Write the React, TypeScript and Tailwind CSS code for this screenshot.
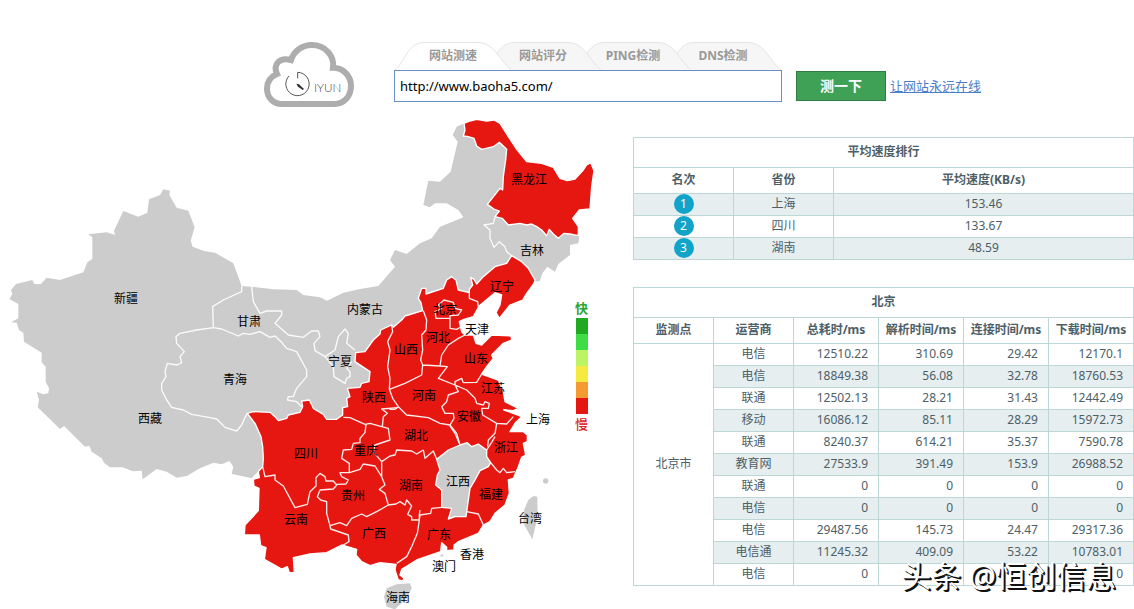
import React, { useState } from "react";

const tabs = [
  { label: "网站测速", layer: "z-40" },
  { label: "网站评分", layer: "z-30" },
  { label: "PING检测", layer: "z-20" },
  { label: "DNS检测", layer: "z-10" },
];

const ranking = [
  { province: "上海", speed: "153.46" },
  { province: "四川", speed: "133.67" },
  { province: "湖南", speed: "48.59" },
];

const results = [
  ["电信", "12510.22", "310.69", "29.42", "12170.1"],
  ["电信", "18849.38", "56.08", "32.78", "18760.53"],
  ["联通", "12502.13", "28.21", "31.43", "12442.49"],
  ["移动", "16086.12", "85.11", "28.29", "15972.73"],
  ["联通", "8240.37", "614.21", "35.37", "7590.78"],
  ["教育网", "27533.9", "391.49", "153.9", "26988.52"],
  ["联通", "0", "0", "0", "0"],
  ["电信", "0", "0", "0", "0"],
  ["电信", "29487.56", "145.73", "24.47", "29317.36"],
  ["电信通", "11245.32", "409.09", "53.22", "10783.01"],
  ["电信", "0", "0", "0", "0"],
];

const resultHeads = ["监测点", "运营商", "总耗时/ms", "解析时间/ms", "连接时间/ms", "下载时间/ms"];

const legendColors = [
  "bg-[#22a922]",
  "bg-[#3fdd45]",
  "bg-[#bdf464]",
  "bg-[#f5ea3d]",
  "bg-[#f59a30]",
  "bg-[#e61610]",
];

// Provinces without a measurement
const greyLand =
  "M510 572 490 568 480 585 447 598 442 638 415 650 370 633 342 692 345 705 320 697 265 703 277 712 277 777 262 787 250 817 180 840 140 833 122 853 103 852 97 840 48 852 33 870 37 883 28 897 55 912 55 955 33 967 50 968 57 990 70 998 72 1025 125 1058 125 1087 137 1100 137 1145 147 1165 145 1180 130 1183 110 1175 117 1200 113 1222 180 1287 192 1278 255 1340 268 1337 275 1355 305 1375 312 1388 330 1402 368 1402 398 1414 425 1412 428 1438 470 1407 500 1415 530 1433 560 1428 600 1405 640 1388 665 1393 688 1383 700 1400 695 1422 725 1428 755 1435 785 1402 1000 1300 1250 1100 1330 900 1500 850 1605 845 1620 843 1627 820 1642 800 1665 815 1675 792 1710 765 1710 735 1735 730 1738 710 1700 600 1560 560 1530 450 1490 400 1410 380 1392 370 1370 380 1358 405 1373 425 1352 515 1320 545 1285 542 1270 615 1290 622 1305 610 1340 610 1375 630 1390 652 1365 662 1320 680 1295 715 1260 730 1220 762 1185 750 1170 780 1185 800 1135 858 1080 867 1030 878 981 902 960 892 910 885 890 870 820 868 755 860 725 858 700 790 645 758 612 753 578 740 572 722 584 682 565 632 530 623 508 585Z";

const heilongjiang =
  "M1392 370 1410 363 1430 358 1460 363 1482 360 1500 370 1525 410 1550 448 1580 485 1625 490 1660 502 1680 535 1702 542 1725 537 1750 510 1760 495 1772 488 1782 512 1775 560 1770 627 1738 630 1718 655 1735 680 1735 707 1710 702 1692 700 1675 715 1660 702 1648 688 1640 707 1625 690 1610 680 1595 672 1580 675 1560 670 1525 675 1507 655 1485 650 1498 633 1482 627 1462 613 1500 565 1508 570 1510 530 1517 480 1520 448 1498 427 1480 440 1445 448 1430 438 1422 415 1405 410 1390 408 1395 390Z";

const redLand =
  "M742 1240 760 1235 810 1237 825 1250 835 1262 860 1255 865 1245 900 1237 908 1220 905 1203 928 1200 940 1225 970 1243 980 1258 1010 1258 1028 1245 1028 1223 1043 1220 1040 1195 1050 1190 1042 1165 1080 1162 1085 1150 1107 1145 1110 1115 1065 1085 1067 1058 1095 1055 1120 1020 1140 1002 1142 990 1175 975 1180 982 1205 960 1215 948 1268 932 1263 908 1255 895 1265 865 1278 865 1278 882 1330 865 1340 840 1355 830 1368 840 1375 870 1408 878 1408 868 1418 855 1412 832 1422 838 1430 852 1450 830 1485 800 1520 790 1535 767 1565 785 1585 805 1605 840 1602 850 1580 880 1568 900 1530 915 1498 955 1488 938 1500 915 1505 885 1485 878 1465 895 1438 917 1420 950 1392 958 1378 965 1385 995 1395 1005 1420 1005 1428 1030 1445 1035 1475 1005 1533 1008 1535 1020 1510 1030 1475 1065 1480 1075 1460 1100 1445 1122 1495 1140 1510 1175 1515 1205 1555 1225 1540 1232 1512 1230 1540 1240 1565 1250 1545 1270 1530 1295 1570 1295 1582 1305 1582 1325 1570 1330 1577 1365 1565 1372 1555 1400 1540 1435 1525 1440 1528 1480 1515 1515 1485 1540 1470 1565 1450 1575 1435 1600 1375 1625 1362 1635 1362 1650 1340 1652 1340 1642 1325 1628 1322 1655 1250 1680 1205 1708 1200 1725 1212 1735 1208 1743 1195 1740 1185 1710 1188 1693 1140 1688 1110 1697 1085 1685 1068 1665 1070 1648 1025 1635 980 1658 930 1662 880 1673 883 1718 868 1718 862 1700 845 1707 793 1678 798 1643 782 1637 778 1605 733 1605 735 1575 775 1532 777 1465 762 1458 760 1438 778 1433 775 1415 788 1400 790 1375 788 1340 783 1310 765 1270Z";

const jiangxi =
  "M1310 1378 1345 1350 1380 1335 1402 1328 1415 1340 1435 1332 1460 1350 1460 1370 1472 1388 1465 1400 1440 1412 1425 1440 1410 1465 1398 1550 1365 1550 1345 1557 1355 1525 1325 1522 1325 1470 1307 1455 1312 1425 1320 1410Z";

const taiwan = "M1600 1488 1612 1490 1613 1550 1597 1618 1570 1570 1572 1530 1585 1500Z";
const hainan = "M1160 1765 1190 1753 1230 1750 1235 1765 1220 1795 1185 1828 1160 1820 1152 1790Z";

// Border lines, grouped by part of the country
const borders = [
  {
    part: "west",
    x: 480,
    y: 540,
    d: "M245 318V335L190 360 158 380 160 443M160 443 110 450 60 460 48 470 50 490 73 515 60 530 65 548 52 555 20 550M-355 7-320 8-290-10-240 10-220 0-190 3-160 18-135 12-115 13-85 0-40-7-5 5 20 10 45 16M22 550 15 575 18 590 5 610 5 630 20 660 35 682 70 690 95 703 150 713 170 717 195 742 230 753 245 735 255 712 262 700M160 443 185 447 235 468 250 460 270 463 300 455 330 472 345 468 365 487 380 505 410 515 440 570 440 590 410 625 400 650 385 650 382 660 410 665 425 680M275 320 280 365 300 400 320 393 365 393 365 405 345 430 385 465 430 472 455 453 475 453 480 470 462 490 465 512 495 530 525 510 535 470 555 447 565 460 560 490 585 510M495 530 520 560 522 590 555 610 560 595 570 590 570 575 560 565 575 545",
  },
  {
    part: "north-east",
    x: 1020,
    y: 330,
    d: "M465 322 460 340 432 345 450 360 450 385 462 412 478 395 495 410 500 425 515 437",
  },
  {
    part: "centre",
    x: 1020,
    y: 810,
    d: "M155 165 158 185 143 215 150 240 143 290 150 325 148 358 158 385 175 410M148 358 195 340 245 315 248 285M250 122 260 150 258 180 245 195 248 240 242 270 248 285 300 288 305 255 325 225 355 205 375 195M300 288 322 290 295 325 345 345 345 335 365 325 370 338 410 337 425 312M345 345 380 360 405 385 410 400 430 405 435 395 448 400 445 415 425 415 428 435 470 460 500 462 520 440M345 345 355 365 325 375 320 395 305 410 315 430 340 430 342 445 330 465M175 410 200 435 265 443 300 460 330 465 350 490 360 525M470 460 465 490 445 510 443 530M490 418 525 428M312 90 340 97 345 115 365 120 355 135 330 137 330 145 288 145 285 125 305 115 295 105ZM330 145V175L350 178 360 172M388 68V85L413 95 415 110M175 410 165 418 148 418",
  },
  {
    part: "south-west",
    x: 690,
    y: 1140,
    d: "M340 112 360 113 405 133 420 130 455 140 475 145 480 180 435 195 430 215 455 245M503 83 455 87 472 100 460 110 457 140M408 133 405 158 390 175 390 188 370 190 365 208 340 210 335 235 358 250 358 278 330 278 335 290 355 300 348 312 320 313M358 278 390 268 400 252 435 258 455 290M455 245V290L465 315 448 328 465 340 475 375M455 245 480 228 495 225 500 210 545 213 560 222 580 210M98 260 105 290 135 285 135 300 160 318 195 383 232 373 240 335 258 318 258 293 270 280 285 290 288 303 310 303 320 315 310 327 270 330 262 350 272 360 290 365 290 400 300 437 330 428 350 437 365 415 395 402 410 410 440 395 475 375 498 372 510 365 525 375 530 360 545 378 533 403 545 410 545 420 568 420 562 460 545 500 530 530 500 550M300 437 302 447 355 465 357 485 340 495M568 420 568 405 570 390",
  },
  {
    part: "south-east",
    x: 1140,
    y: 1200,
    d: "M130 150 135 175 160 153 170 178M118 358 120 345 152 340 155 325 185 322M332 188 350 210 360 218 370 205 380 218 405 215M260 335 295 342 310 375M320 150 333 130 345 110M210 78 225 100 240 135",
  },
];

const labels: [string, number, number][] = [
  ["新疆", 126, 298],
  ["西藏", 150, 418],
  ["青海", 235, 379],
  ["甘肃", 249, 321],
  ["宁夏", 340, 361],
  ["内蒙古", 365, 309],
  ["黑龙江", 529, 179],
  ["吉林", 532, 250],
  ["辽宁", 502, 286],
  ["北京", 445, 309],
  ["天津", 477, 329],
  ["河北", 438, 337],
  ["山西", 406, 349],
  ["山东", 476, 358],
  ["陕西", 374, 397],
  ["河南", 424, 395],
  ["江苏", 493, 388],
  ["安徽", 469, 416],
  ["上海", 538, 419],
  ["湖北", 416, 435],
  ["浙江", 506, 447],
  ["四川", 306, 453],
  ["重庆", 366, 450],
  ["湖南", 411, 485],
  ["江西", 458, 481],
  ["贵州", 353, 495],
  ["福建", 491, 494],
  ["云南", 296, 519],
  ["广西", 374, 533],
  ["广东", 439, 534],
  ["台湾", 530, 518],
  ["香港", 472, 554],
  ["澳门", 444, 566],
  ["海南", 398, 597],
];

const Logo: React.FC = () => (
  <svg viewBox="42 36 270 195" className="h-[65px] w-[90px] shrink-0" role="img" aria-label="IYUN">
    <path
      d="M95 222C70 222 51 202 51 176C51 155 62 140 81 132C68 104 88 80 123 90C132 62 158 45 185 45C226 45 254 78 249 113C280 113 303 138 303 168C303 200 281 222 253 222Z"
      fill="none"
      stroke="#adadad"
      strokeWidth="18"
    />
    <path d="M143 145V127A35 35 0 1 1 117 138" fill="none" stroke="#555" strokeWidth="3" />
    <path d="M139 161 147 163 162 177 158 180 144 170Z" fill="#333" />
    <text x="192" y="186" fontSize="35" fill="#444" className="font-['Lato'] font-light">
      IYUN
    </text>
  </svg>
);

const ChinaMap: React.FC = () => (
  <svg viewBox="0 330 1800 1497" className="block h-auto w-[600px]" role="img" aria-label="各省测速地图">
    <path d={greyLand} fill="#ccc" />
    <g fill="#e61610" stroke="#fff" strokeWidth="4" strokeLinejoin="round">
      <path d={heilongjiang} />
      <path d={redLand} />
      <path d={jiangxi} fill="#ccc" />
    </g>
    <g fill="#ccc">
      <path d={taiwan} />
      <path d={hainan} />
      <circle cx="1637" cy="1443" r="8" />
      <path d="M1318 1668 1328 1662 1330 1670Z" />
    </g>
    <g fill="none" stroke="#fff" strokeOpacity="0.92" strokeWidth="4" strokeLinejoin="round">
      {borders.map((b) => (
        <path key={b.part} d={b.d} transform={`translate(${b.x} ${b.y})`} />
      ))}
    </g>
    <g fontSize="36" textAnchor="middle" fill="#000">
      {labels.map(([name, x, y]) => (
        <text key={name} x={x * 3} y={y * 3 + 14}>
          {name}
        </text>
      ))}
    </g>
  </svg>
);

const cell = "border border-[#bdd6d6] px-0 pt-0 pb-0.5 text-center";

const App: React.FC = () => {
  const [url, setUrl] = useState("http://www.baoha5.com/");
  const [active, setActive] = useState(0);

  return (
    <div className="bg-white pt-[42px] font-['Noto_Sans','Noto_Sans_CJK_SC',sans-serif] text-xs text-[#4d6067]">
      <header className="flex h-[68px] items-start pl-[264px]">
        <Logo />
        <form className="ml-10 flex items-end" onSubmit={(e) => e.preventDefault()}>
          <div>
            <div className="flex h-7">
              {tabs.map((tab, i) => (
                <button
                  key={tab.label}
                  type="button"
                  onClick={() => setActive(i)}
                  className={`relative -mr-7 h-7 w-[118px] font-bold text-[#999] last:mr-0 ${tab.layer}`}
                >
                  <svg viewBox="0 0 118 28" className="absolute inset-0 h-full w-full">
                    <path
                      d="M1 28C11 20 13 1 30 .5H84C101 1 104 17 117 28"
                      fill={i === active ? "#fff" : "#f6f6f6"}
                      stroke="#e4e4e4"
                    />
                  </svg>
                  <span className="relative">{tab.label}</span>
                </button>
              ))}
            </div>
            <input
              type="text"
              aria-label="网址"
              value={url}
              onChange={(e) => setUrl(e.target.value)}
              className="block h-8 w-[388px] border border-[#6a8fc8] px-[5px] text-[13px] text-black outline-none"
            />
          </div>
          <button
            type="submit"
            className="mb-px ml-3.5 h-[30px] w-[90px] border border-[#2f7d43] bg-[#3fa156] text-sm font-bold text-white"
          >
            测一下
          </button>
          <a href="#" className="mb-1.5 ml-1 text-[13px] leading-5 text-[#4a7ec8] underline">
            让网站永远在线
          </a>
        </form>
      </header>

      <main className="grid grid-cols-[633px_1fr]">
        <div className="relative">
          <ChinaMap />
          <div className="absolute left-[575px] top-[189px] flex flex-col items-center text-[13px] leading-[18px]">
            <span className="font-bold text-[#2fa52f]">快</span>
            <div className="my-px">
              {legendColors.map((color) => (
                <div key={color} className={`h-4 w-3 ${color}`} />
              ))}
            </div>
            <span className="font-medium text-[#d8261f]">慢</span>
          </div>
        </div>

        <div className="pt-[27px]">
          <table className="w-full table-fixed border-collapse">
            <colgroup>
              <col className="w-1/5" />
              <col className="w-1/5" />
              <col className="w-3/5" />
            </colgroup>
            <thead>
              <tr className="h-[30px]">
                <th colSpan={3} className={cell}>
                  平均速度排行
                </th>
              </tr>
              <tr className="h-[26px]">
                <th className={cell}>名次</th>
                <th className={cell}>省份</th>
                <th className={cell}>平均速度(KB/s)</th>
              </tr>
            </thead>
            <tbody>
              {ranking.map((row, i) => (
                <tr key={row.province} className="h-[22px] odd:bg-[#e6eef0]">
                  <td className="border border-[#bdd6d6] px-0 pt-0 pb-px text-center">
                    <span className="mx-auto block size-5 rounded-full bg-[#12a3c9] leading-5 text-white">
                      {i + 1}
                    </span>
                  </td>
                  <td className={cell}>{row.province}</td>
                  <td className={cell}>{row.speed}</td>
                </tr>
              ))}
            </tbody>
          </table>

          <div className="relative mt-[27px]">
            <table className="w-full table-fixed border-collapse">
              <colgroup>
                <col className="w-[16%]" />
                <col className="w-[16%]" />
                <col className="w-[17%]" />
                <col className="w-[17%]" />
                <col className="w-[17%]" />
                <col className="w-[17%]" />
              </colgroup>
              <thead>
                <tr className="h-[30px]">
                  <th colSpan={6} className={cell}>
                    北京
                  </th>
                </tr>
                <tr className="h-[26px]">
                  {resultHeads.map((head) => (
                    <th key={head} className={cell}>
                      {head}
                    </th>
                  ))}
                </tr>
              </thead>
              <tbody>
                {results.map(([isp, ...times], i) => (
                  <tr key={i} className="h-[22px] even:bg-[#e6eef0]">
                    {i === 0 && (
                      <td rowSpan={results.length} className={`bg-white ${cell}`}>
                        北京市
                      </td>
                    )}
                    <td className={cell}>{isp}</td>
                    {times.map((time, j) => (
                      <td key={j} className="border border-[#bdd6d6] pt-0 pr-2.5 pb-0.5 pl-0 text-right">
                        {time}
                      </td>
                    ))}
                  </tr>
                ))}
              </tbody>
            </table>
            <div className="absolute -bottom-2 right-[18px] whitespace-nowrap text-[30px] leading-9 text-white [text-shadow:2px_2px_0_#111,1px_1px_0_#111]">
              头条 @恒创信息
            </div>
          </div>
        </div>
      </main>
    </div>
  );
};

export default App;
